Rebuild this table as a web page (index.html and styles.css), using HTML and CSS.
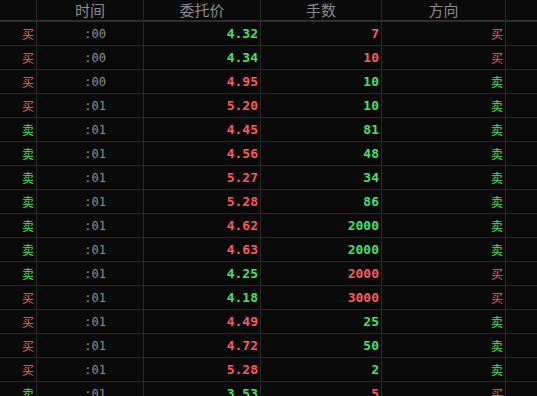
FILE: index.html
```html
<!DOCTYPE html>
<html lang="zh">
<head>
<meta charset="utf-8">
<link rel="stylesheet" href="styles.css">
</head>
<body>
<div class="grid">
  <div class="h"></div><div class="h">时间</div><div class="h">委托价</div><div class="h">手数</div><div class="h">方向</div><div class="h"></div>

  <div class="c side up">买</div><div class="c t">:00</div><div class="c n dn">4.32</div><div class="c n up">7</div><div class="c dir up">买</div><div class="c"></div>
  <div class="c side up">买</div><div class="c t">:00</div><div class="c n dn">4.34</div><div class="c n up">10</div><div class="c dir up">买</div><div class="c"></div>
  <div class="c side up">买</div><div class="c t">:00</div><div class="c n up">4.95</div><div class="c n dn">10</div><div class="c dir dn">卖</div><div class="c"></div>
  <div class="c side up">买</div><div class="c t">:01</div><div class="c n up">5.20</div><div class="c n dn">10</div><div class="c dir dn">卖</div><div class="c"></div>
  <div class="c side dn">卖</div><div class="c t">:01</div><div class="c n up">4.45</div><div class="c n dn">81</div><div class="c dir dn">卖</div><div class="c"></div>
  <div class="c side dn">卖</div><div class="c t">:01</div><div class="c n up">4.56</div><div class="c n dn">48</div><div class="c dir dn">卖</div><div class="c"></div>
  <div class="c side dn">卖</div><div class="c t">:01</div><div class="c n up">5.27</div><div class="c n dn">34</div><div class="c dir dn">卖</div><div class="c"></div>
  <div class="c side dn">卖</div><div class="c t">:01</div><div class="c n up">5.28</div><div class="c n dn">86</div><div class="c dir dn">卖</div><div class="c"></div>
  <div class="c side dn">卖</div><div class="c t">:01</div><div class="c n up">4.62</div><div class="c n dn">2000</div><div class="c dir dn">卖</div><div class="c"></div>
  <div class="c side dn">卖</div><div class="c t">:01</div><div class="c n up">4.63</div><div class="c n dn">2000</div><div class="c dir dn">卖</div><div class="c"></div>
  <div class="c side dn">卖</div><div class="c t">:01</div><div class="c n dn">4.25</div><div class="c n up">2000</div><div class="c dir up">买</div><div class="c"></div>
  <div class="c side up">买</div><div class="c t">:01</div><div class="c n dn">4.18</div><div class="c n up">3000</div><div class="c dir up">买</div><div class="c"></div>
  <div class="c side up">买</div><div class="c t">:01</div><div class="c n up">4.49</div><div class="c n dn">25</div><div class="c dir dn">卖</div><div class="c"></div>
  <div class="c side up">买</div><div class="c t">:01</div><div class="c n up">4.72</div><div class="c n dn">50</div><div class="c dir dn">卖</div><div class="c"></div>
  <div class="c side up">买</div><div class="c t">:01</div><div class="c n up">5.28</div><div class="c n dn">2</div><div class="c dir dn">卖</div><div class="c"></div>
  <div class="c side dn">卖</div><div class="c t">:01</div><div class="c n dn">3.53</div><div class="c n up">5</div><div class="c dir up">买</div><div class="c"></div>
</div>
</body>
</html>
```
FILE: styles.css
```css
html, body {
  margin: 0;
  padding: 0;
  background: #0a0a0a;
  overflow: hidden;
  width: 537px;
  height: 396px;
}
.grid {
  display: grid;
  grid-template-columns: 36px 106px 116px 120px 123px 1fr;
  grid-template-rows: 21px;
  grid-auto-rows: 23px;
  gap: 1px;
  background: #2a2a2a;
  font-family: "Noto Sans CJK SC", "DejaVu Sans", sans-serif;
}
.h {
  box-sizing: border-box;
  height: 21px;
  border-bottom: 1px solid #333;
  background: #0a0a0a;
  color: #8c8c8c;
  font-size: 15px;
  line-height: 19px;
  text-align: center;
}
.c {
  background: #0a0a0a;
  display: flex;
  align-items: center;
  justify-content: flex-end;
  padding-right: 2px;
  overflow: hidden;
}
.side, .dir {
  font-size: 12px;
}
.t {
  color: #8e8e8e;
  font-family: "DejaVu Sans Mono", monospace;
  font-size: 12px;
  padding-right: 37px;
}
.n {
  font-family: "DejaVu Sans Mono", monospace;
  font-weight: bold;
  font-size: 13px;
}
.up { color: #ff5a5a; }
.dn { color: #48e066; }
```
